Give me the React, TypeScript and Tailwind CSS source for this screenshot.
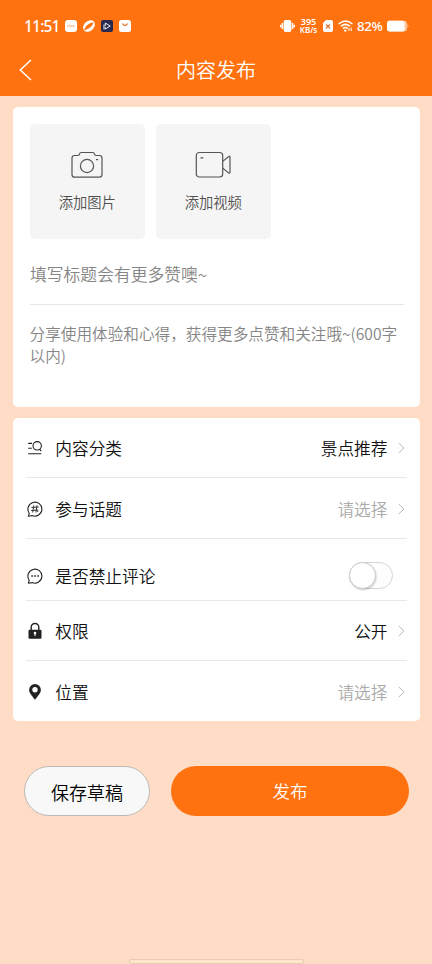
import type { ReactNode } from 'react';

function StatusBar() {
  return (
    <div className="flex h-[52px] items-center pl-[24px] pr-[24px] text-white">
      <span className="w-[35px] whitespace-nowrap font-['Noto_Sans',sans-serif] text-[15.5px] font-medium leading-5 tracking-[-0.8px]">11:51</span>
      <div className="ml-[6px] flex items-center gap-[6px]">
        <span className="flex h-3 w-3 items-center justify-center rounded-[3px] bg-white font-['Noto_Sans',sans-serif] text-[4px] font-semibold leading-none text-[#ff9c55]">vivo</span>
        <svg width="12" height="12" viewBox="0 0 12 12">
          <ellipse cx="6" cy="6" rx="6.6" ry="4.9" transform="rotate(-42 6 6)" fill="#fff" />
          <path d="M1 10.2C2.2 6.4 5.6 3 10.6 2.3C9.6 6 6 9.4 1 10.2Z" fill="#ff720f" />
        </svg>
        <svg width="12" height="12" viewBox="0 0 12 12">
          <rect width="12" height="12" rx="2" fill="#29294f" />
          <path d="M4.3 6V3L9.2 6L4.3 9V7.2M3 4.5V9.5" fill="none" stroke="#eee" strokeWidth="1" />
        </svg>
        <svg width="12" height="12" viewBox="0 0 12 12">
          <rect width="12" height="12" rx="2.5" fill="#fff" />
          <path d="M3.5 3.5Q6 7.7 8.5 3.5" fill="none" stroke="#e76b22" strokeWidth="1.3" />
        </svg>
      </div>
      <div className="ml-auto flex items-center">
        <svg width="15" height="14" viewBox="0 0 15 14">
          <rect x="3.6" y="1" width="7.8" height="12" rx="2" fill="#fff" />
          <path d="M2.3 4V10M.6 5.8V8.2M12.7 4V10M14.4 5.8V8.2" stroke="#fff" strokeWidth="1.4" />
        </svg>
        <div className="ml-[4px] flex w-[19px] flex-col items-center whitespace-nowrap font-['Noto_Sans',sans-serif] font-semibold">
          <span className="h-[8px] text-[9px] leading-[8px]">395</span>
          <span className="h-[8px] text-[8px] leading-[8px]">KB/s</span>
        </div>
        <svg className="ml-[5px]" width="10" height="12" viewBox="0 0 10 12">
          <path d="M3 0H8Q10 0 10 2V10Q10 12 8 12H2Q0 12 0 10V3Z" fill="#fff" />
          <path d="M3 4.5L7 8.3M7 4.5L3 8.3" stroke="#e06a20" strokeWidth="1.1" />
        </svg>
        <svg className="ml-[5px]" width="15" height="12" viewBox="0 0 15 12">
          <path d="M.6 4Q7.5 -2 14.4 4M2.9 6.3Q7.5 2.4 12 6.3M5 8.6Q7.5 6.5 9.8 8.6" fill="none" stroke="#fff" strokeWidth="1.5" />
          <circle cx="7.3" cy="10.6" r="1.2" fill="#fff" />
          <path d="M11 11V8M13.2 7.5V11" stroke="#fff" strokeWidth="1" />
        </svg>
        <span className="ml-[4px] w-[26px] whitespace-nowrap font-['Noto_Sans',sans-serif] text-[13.3px] font-medium leading-4 tracking-[-0.4px]">82%</span>
        <svg className="-mr-[1px] ml-[3px]" width="23" height="12" viewBox="0 0 23 12">
          <rect x="1" y=".8" width="20" height="10.6" rx="3" fill="#ffc79f" />
          <rect x="1" y=".8" width="17.5" height="10.6" rx="2.5" fill="#fff" />
          <path d="M21.5 4Q23.5 6 21.5 8Z" fill="#ffc79f" />
        </svg>
      </div>
    </div>
  );
}

function CameraIcon() {
  return (
    <svg width="32" height="28" viewBox="0 0 32 28" fill="none" stroke="#555" strokeWidth="1.2">
      <path d="M3.5 4.5H7Q8.3 4.5 8.5 3.2Q8.8 1.5 10.2 1.5H21.8Q23.2 1.5 23.5 3.2Q23.7 4.5 25 4.5H28.5Q31 4.5 31 7V23.5Q31 26.2 28.5 26.2H3.5Q1 26.2 1 23.5V7Q1 4.5 3.5 4.5Z" />
      <circle cx="16" cy="15" r="6.6" />
      <path d="M25 8.6H27.2" />
    </svg>
  );
}

function VideoIcon() {
  return (
    <svg width="36" height="28" viewBox="0 0 36 28" fill="none" stroke="#555" strokeWidth="1.2">
      <rect x="1.3" y="1.5" width="26.4" height="24.5" rx="3" />
      <path d="M5.5 6.8H8.3M27.7 10.4L33.4 5.7Q35 4.7 35 6.5V21Q35 22.9 33.4 21.8L27.7 17.1" />
    </svg>
  );
}

function UploadTile({ icon, label }: { icon: ReactNode; label: string }) {
  return (
    <button className="flex h-[115px] w-[115.5px] flex-col items-center rounded-[5px] bg-[#f5f5f5] pt-[27px]">
      {icon}
      <span className="mt-[13px] text-[14.3px] leading-5 text-[#505050]">{label}</span>
    </button>
  );
}

function Chevron() {
  return (
    <svg className="ml-[10.5px]" width="7" height="12" viewBox="0 0 7 12" fill="none" stroke="#b8b8b8" strokeWidth="1">
      <path d="M.8 1L5.9 6L.8 11" />
    </svg>
  );
}

function CategoryIcon() {
  return (
    <svg width="16" height="16" viewBox="0 0 16 16" fill="none" stroke="#222" strokeWidth="1.1">
      <circle cx="10.2" cy="5.8" r="4.2" />
      <path d="M12.6 9.3L14.3 11.2M1.2 3.4H5M1.2 8.2H4.8M1.2 13.7H14.3" />
    </svg>
  );
}

function TopicIcon() {
  return (
    <svg width="16" height="16" viewBox="0 0 16 16" fill="none" stroke="#222" strokeWidth="1.1">
      <path d="M2.2 12.2A7 7 0 1 1 5.2 14.6L1.5 15.2Z" />
      <path d="M6.8 4.3L5.7 11.5M10 4.3L8.9 11.5M4.5 6.5L11.7 6M4.2 9.5L11.3 9M9.6 9.2L11.2 11" strokeWidth=".9" />
    </svg>
  );
}

function CommentIcon() {
  return (
    <svg width="16" height="16" viewBox="0 0 16 16" fill="none" stroke="#222" strokeWidth="1.1">
      <path d="M2.2 12.2A7 7 0 1 1 5.2 14.6L1.5 15.2Z" />
      <path d="M4.3 8H5.9M7.3 8H8.9M10.3 8H11.9" strokeWidth="1.6" />
    </svg>
  );
}

function LockIcon() {
  return (
    <svg width="16" height="18" viewBox="0 0 16 18">
      <path d="M4.2 8V5.3A3.8 3.8 0 0 1 11.8 5.3V8" fill="none" stroke="#222" strokeWidth="1.4" />
      <rect x="1.5" y="7.7" width="13" height="9" rx="1" fill="#222" />
      <circle cx="8" cy="11" r="1.3" fill="#fff" />
      <path d="M8 11V14" stroke="#fff" strokeWidth="1.1" />
    </svg>
  );
}

function PinIcon() {
  return (
    <svg width="16" height="18" viewBox="0 0 16 18">
      <path fillRule="evenodd" d="M8 1A5.9 5.9 0 0 0 2.1 6.9C2.1 10.2 6 13.4 8 16.8C10 13.4 13.9 10.2 13.9 6.9A5.9 5.9 0 0 0 8 1ZM8 4.1A2.7 2.7 0 1 1 8 9.5A2.7 2.7 0 0 1 8 4.1Z" fill="#222" />
    </svg>
  );
}

function Row({ icon, label, children, className }: { icon: ReactNode; label: string; children: ReactNode; className: string }) {
  return (
    <div className={`flex items-center border-[#e8e8e8] pr-[1.5px] text-[16.7px] leading-6 ${className}`}>
      <span className="ml-[1.5px] flex w-[16px] justify-center">{icon}</span>
      <span className="ml-[12.3px] text-[#111]">{label}</span>
      <div className="ml-auto flex items-center">{children}</div>
    </div>
  );
}

export default function App() {
  return (
    <div className="flex h-[964px] w-[432px] flex-col overflow-hidden bg-[#ffdcc6] font-['Noto_Sans_CJK_SC',sans-serif] font-[350]">
      <header className="h-24 bg-[#ff720f]">
        <StatusBar />
        <div className="grid h-[36px] grid-cols-[60px_1fr_60px] items-center text-white">
          <svg className="ml-[19px]" width="13" height="22" viewBox="0 0 13 22" fill="none" stroke="#fff" strokeWidth="1.5">
            <path d="M12 1L1.3 11L12 21" />
          </svg>
          <h1 className="text-center text-[20px] font-[350] leading-7">内容发布</h1>
        </div>
      </header>

      <section className="mx-auto mt-[11px] h-[300px] w-[407px] rounded-[5px] bg-white pl-[17px] pr-[16px] pt-[17px]">
        <div className="flex gap-[10.5px]">
          <UploadTile icon={<CameraIcon />} label="添加图片" />
          <UploadTile icon={<VideoIcon />} label="添加视频" />
        </div>
        <div className="flex h-[66px] items-center border-b border-[#e6e6e6] pl-[0.5px] pt-[6px] text-[16.8px] text-[#858585]">填写标题会有更多赞噢~</div>
        <p className="pt-[18px] text-[15.63px] leading-[22.4px] text-[#858585]">分享使用体验和心得，获得更多点赞和关注哦~(600字<br />以内)</p>
      </section>

      <section className="mx-auto mt-[11px] h-[303px] w-[407px] rounded-[5px] bg-white px-[13px]">
        <Row className="h-[60px] border-b" icon={<CategoryIcon />} label="内容分类">
          <span className="text-[#111]">景点推荐</span><Chevron />
        </Row>
        <Row className="h-[61px] border-b pt-[2px]" icon={<TopicIcon />} label="参与话题">
          <span className="text-[#aaa]">请选择</span><Chevron />
        </Row>
        <Row className="h-[62px] border-b pt-[12px]" icon={<CommentIcon />} label="是否禁止评论">
          <span className="mr-[12.5px] flex h-[27px] w-[44px] rounded-full border border-[#d5d5d5] bg-[#fdfdfd]">
            <span className="-ml-px -mt-px h-[27px] w-[27px] rounded-full border border-[#ccc] bg-white shadow-[0.5px_1px_2px_rgba(0,0,0,0.2)]" />
          </span>
        </Row>
        <Row className="h-[60px] border-b" icon={<LockIcon />} label="权限">
          <span className="text-[#111]">公开</span><Chevron />
        </Row>
        <Row className="h-[60px] pt-[2px]" icon={<PinIcon />} label="位置">
          <span className="text-[#aaa]">请选择</span><Chevron />
        </Row>
      </section>

      <div className="mt-[45px] flex pl-[24px]">
        <button className="h-[50px] w-[126px] rounded-full border border-[#bdb9b6] bg-[#f8f8f8] pt-[2px] text-[18px] text-black">保存草稿</button>
        <button className="ml-[21px] h-[50px] w-[238px] rounded-full bg-[#ff720f] text-[17.5px] text-white">发布</button>
      </div>
      <div className="mx-auto mt-auto h-[5px] w-[175px] rounded-[2px] border border-[#e8cbb0] bg-[#ffe5cb]" />
    </div>
  );
}
